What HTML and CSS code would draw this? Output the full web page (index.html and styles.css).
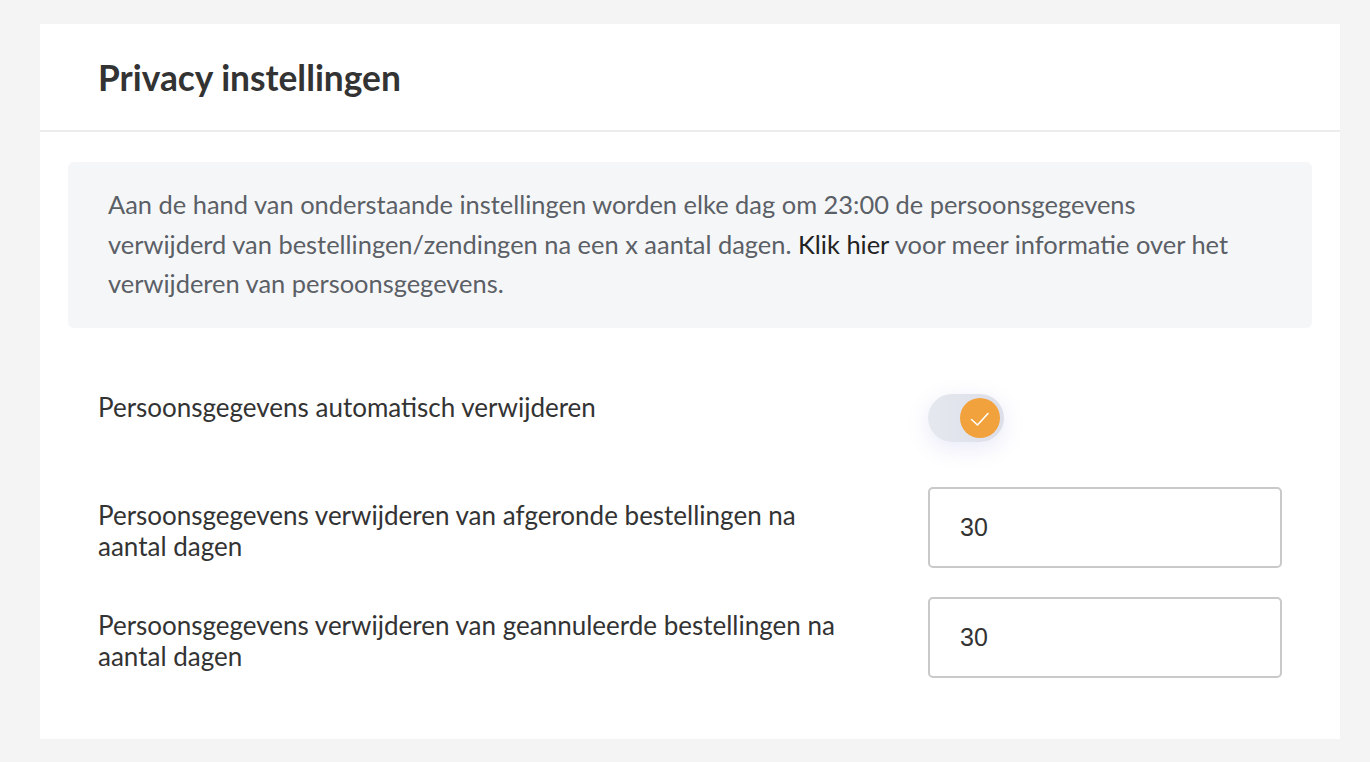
FILE: index.html
```html
<!DOCTYPE html>
<html>
<head>
    <title>Privacy instellingen</title>
    <link rel="stylesheet" href="styles.css">
</head>
<body>
    <div class="card">
        <div class="card-header">
            <h1>Privacy instellingen</h1>
        </div>
        <div class="card-body">
            <!-- uitleg -->
            <p class="notice">
                Aan de hand van onderstaande instellingen worden elke dag om 23:00 de persoonsgegevens
                verwijderd van bestellingen/zendingen na een x aantal dagen. <a href="#">Klik hier</a> voor meer informatie over het
                verwijderen van persoonsgegevens.
            </p>

            <div class="settings">
                <div class="row row-toggle">
                    <label class="label">Persoonsgegevens automatisch verwijderen</label>
                    <div class="control">
                        <span class="toggle">
                            <span class="knob">
                                <svg width="40" height="40" viewBox="0 0 40 40">
                                    <path d="M11.5 21.5 L17.5 27 L28 15.5" fill="none" stroke="#fff" stroke-width="1.6" stroke-linecap="round" stroke-linejoin="round"/>
                                </svg>
                            </span>
                        </span>
                    </div>
                </div>
                <div class="row">
                    <label class="label">Persoonsgegevens verwijderen van afgeronde bestellingen na aantal dagen</label>
                    <div class="control">
                        <input class="field" type="text" value="30">
                    </div>
                </div>
                <div class="row">
                    <label class="label">Persoonsgegevens verwijderen van geannuleerde bestellingen na aantal dagen</label>
                    <div class="control">
                        <input class="field" type="text" value="30">
                    </div>
                </div>
            </div>
        </div>
    </div>
</body>
</html>
```

FILE: styles.css
```css
body {
    margin: 0;
    padding: 24px 30px 22px 40px;
    background-color: #f4f4f4;
    font-family: Lato, "Open Sans", sans-serif;
    color: #333;
}

.card {
    background-color: #fff;
    width: 1300px;
}

.card-header {
    height: 106px;
    padding: 0 58px;
    display: flex;
    align-items: center;
    border-bottom: 2px solid #ececec;
}

.card-header h1 {
    margin: 0;
    font-size: 35.3px;
    font-weight: 700;
    color: #333;
}

.card-body {
    padding: 30px 28px 61px;
}

.notice {
    margin: 0;
    padding: 23px 62px 24px 40px;
    background-color: #f5f6f8;
    border-radius: 6px;
    font-size: 25.45px;
    line-height: 39.5px;
    color: #5b5f66;
}

.notice a {
    color: #222;
    text-decoration: none;
}

.settings {
    padding: 0 30px;
    margin-top: 64px;
}

.row {
    display: grid;
    grid-template-columns: 1fr 354px;
    margin-bottom: 29px;
}

.row:last-child {
    margin-bottom: 0;
}

.row-toggle {
    margin-bottom: 45px;
}

.label {
    max-width: 750px;
    padding-top: 13px;
    font-size: 26px;
    line-height: 31px;
    color: #333;
}

.row-toggle .label {
    padding-top: 0;
}

.toggle {
    display: flex;
    align-items: center;
    justify-content: flex-end;
    width: 76px;
    height: 48px;
    margin-top: 2px;
    padding: 0 4px;
    box-sizing: border-box;
    border-radius: 24px;
    background: linear-gradient(90deg, #e6e8ef, #dcdfe9);
    box-shadow: 0 6px 22px rgba(110, 120, 210, 0.16);
}

.knob {
    display: block;
    width: 40px;
    height: 40px;
    border-radius: 50%;
    background-color: #f2a23c;
}

.knob svg {
    display: block;
}

.field {
    display: block;
    width: 354px;
    height: 81px;
    box-sizing: border-box;
    padding: 0 30px;
    border: 2px solid #c9c9c9;
    border-radius: 5px;
    font-family: "Liberation Sans", Arial, sans-serif;
    font-size: 25px;
    color: #333;
    outline: none;
}
```
